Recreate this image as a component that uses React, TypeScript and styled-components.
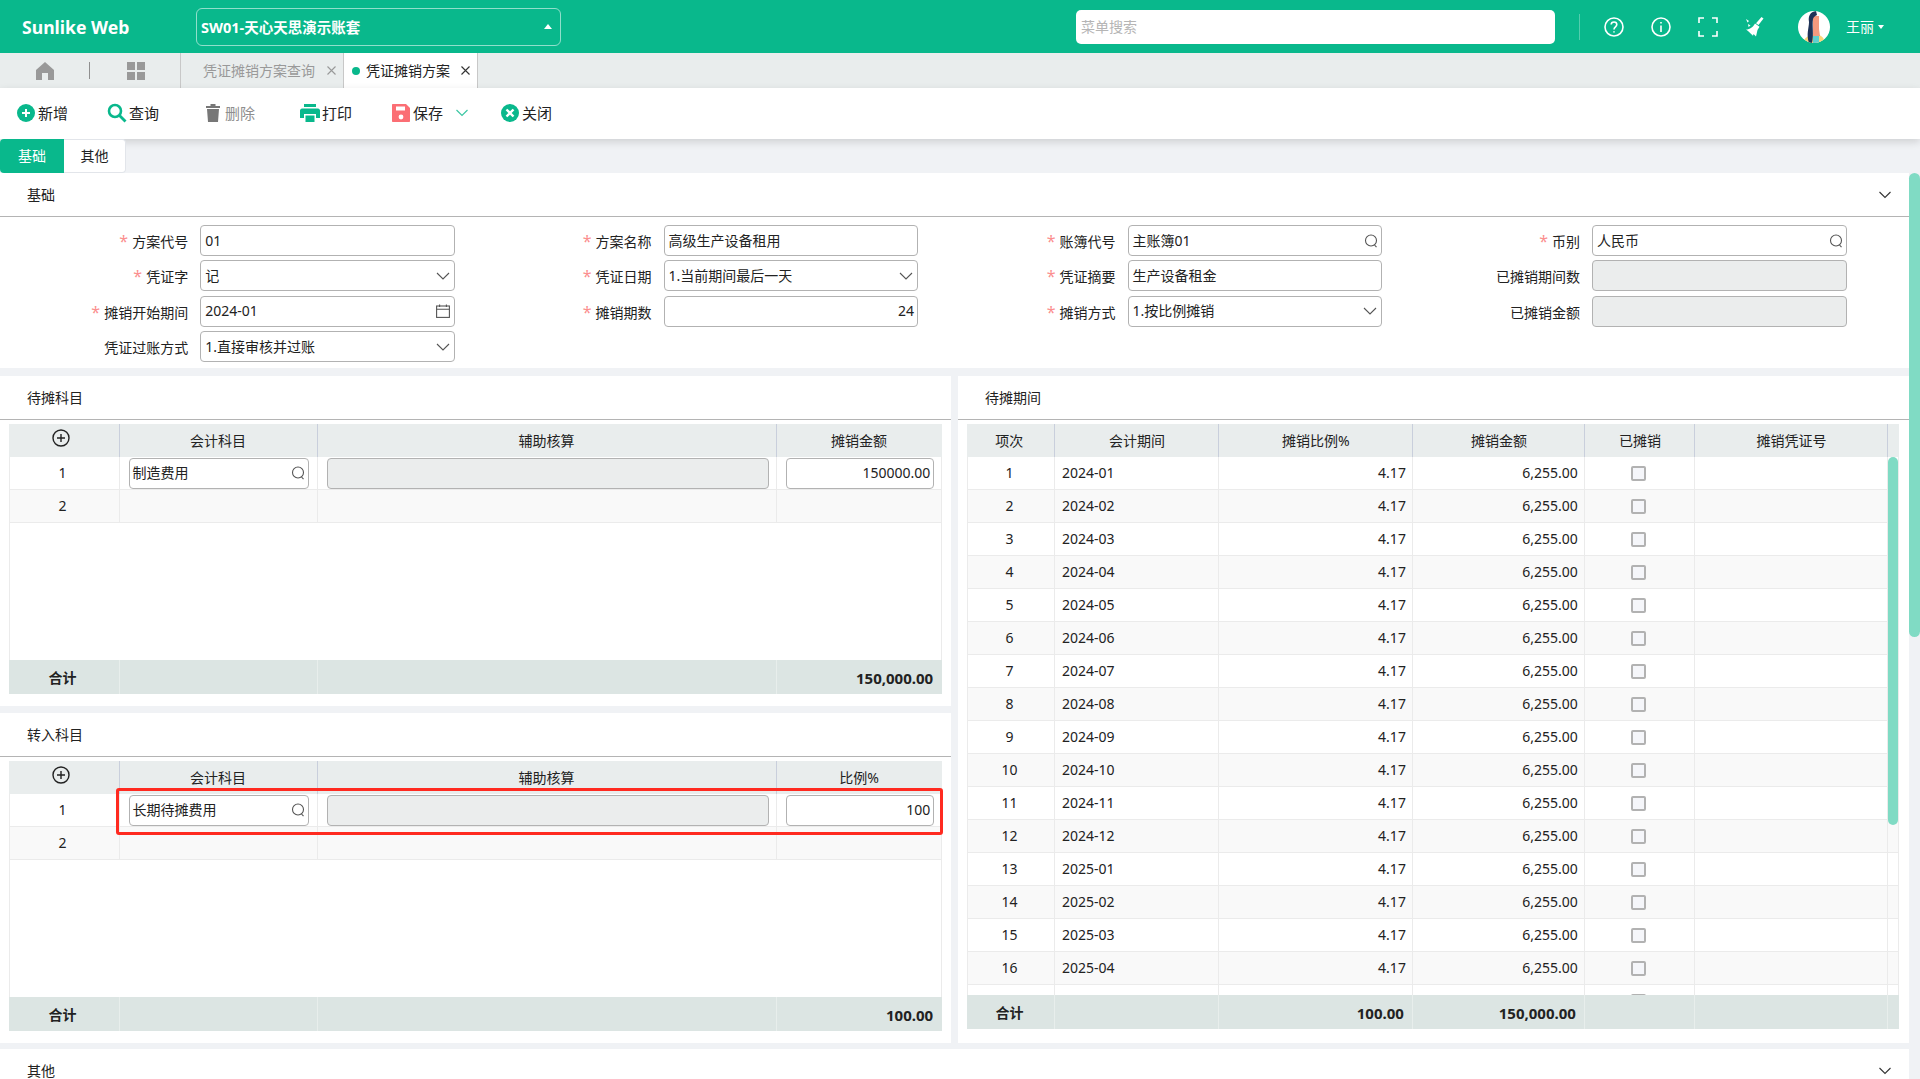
import React from 'react'
import styled, { createGlobalStyle } from 'styled-components'

const GlobalStyle = createGlobalStyle`
  html, body {
    margin: 0;
    padding: 0;
    background: #f0f2f5;
    font-family: "Noto Sans", "Noto Sans CJK SC", sans-serif;
    font-size: 14px;
    line-height: 20px;
    color: #222;
  }
  * { box-sizing: border-box; }
`

const GREEN = '#09b88c'

const Page = styled.div`
  width: 1920px;
  height: 1079px;
  overflow: hidden;
  display: flex;
  flex-direction: column;
  background: #f0f2f5;
`

/* top bar */
const TopBar = styled.header`
  height: 53px;
  flex: none;
  display: flex;
  align-items: center;
  background: ${GREEN};
  color: #fff;
`

const Logo = styled.div`
  width: 196px;
  padding-left: 22px;
  font-size: 17.6px;
  font-weight: 700;
`

const AccountSelect = styled.div`
  width: 365px;
  height: 38px;
  display: flex;
  align-items: center;
  justify-content: space-between;
  padding: 0 8px 0 4px;
  border: 1px solid rgba(255, 255, 255, 0.55);
  border-radius: 6px;
  font-size: 14.5px;
  font-weight: 700;
`

const CaretUp = styled.span`
  width: 0;
  height: 0;
  border-left: 4.5px solid transparent;
  border-right: 4.5px solid transparent;
  border-bottom: 5px solid #fff;
`

const SearchBox = styled.div`
  width: 479px;
  height: 34px;
  margin-left: 515px;
  display: flex;
  align-items: center;
  padding-left: 4px;
  background: #fff;
  border-radius: 5px;
  border: 1px solid rgba(255, 255, 255, 0.4);
  color: #b5b5b5;
`

const BarDivider = styled.span`
  width: 1px;
  height: 26px;
  margin-left: 24px;
  background: rgba(255, 255, 255, 0.3);
`

const BarIcons = styled.div`
  display: flex;
  align-items: center;
  gap: 27px;
  margin-left: 24px;
`

const BarIcon = styled.svg`
  width: 20px;
  height: 20px;
  display: block;
  fill: none;
  stroke: #fff;
  stroke-width: 1.6;
`

const Broom = styled.svg`
  width: 20px;
  height: 20px;
  display: block;
  fill: #fff;
`

const Avatar = styled.svg`
  width: 32px;
  height: 32px;
  margin-left: 33px;
  border-radius: 50%;
  background: #fff;
`

const UserName = styled.div`
  margin-left: 16px;
  display: flex;
  align-items: center;
  gap: 4px;
`

const CaretDown = styled.span`
  width: 0;
  height: 0;
  border-left: 3.5px solid transparent;
  border-right: 3.5px solid transparent;
  border-top: 4px solid #fff;
`

/* open tabs */
const TabStrip = styled.nav`
  height: 35px;
  flex: none;
  display: flex;
  background: #e9eded;
`

const StripIcons = styled.div`
  width: 180px;
  display: flex;
  align-items: center;
  padding-left: 36px;
`

const StripDivider = styled.span`
  width: 1px;
  height: 17px;
  margin: 0 37px 0 35px;
  background: #8f8f8f;
`

const PageTab = styled.div<{ $active?: boolean; $width: number }>`
  width: ${p => p.$width}px;
  display: flex;
  align-items: center;
  gap: 4px;
  padding: ${p => (p.$active ? '0 7px 0 8px' : '0 7px 0 22px')};
  border-left: 1px solid #c8c8c8;
  border-right: ${p => (p.$active ? '1px solid #c8c8c8' : 'none')};
  background: ${p => (p.$active ? '#fff' : 'transparent')};
  color: ${p => (p.$active ? '#222' : '#999')};
`

const TabDot = styled.span`
  width: 8px;
  height: 8px;
  margin-right: 2px;
  border-radius: 50%;
  background: ${GREEN};
`

const TabClose = styled.svg<{ $dark?: boolean }>`
  width: 9px;
  height: 9px;
  margin-left: auto;
  fill: none;
  stroke: ${p => (p.$dark ? '#333' : '#999')};
  stroke-width: 1.1;
`

/* toolbar */
const Toolbar = styled.div`
  height: 51px;
  flex: none;
  position: relative;
  display: flex;
  align-items: center;
  padding: 0 0 2px 16px;
  background: #fff;
  box-shadow: 0 3px 8px rgba(0, 0, 0, 0.14);
`

const ToolButton = styled.div<{ $disabled?: boolean; $width: number }>`
  width: ${p => p.$width}px;
  flex: none;
  display: flex;
  align-items: center;
  gap: 2px;
  font-size: 15px;
  color: ${p => (p.$disabled ? '#8e8e8e' : '#222')};
`

const ToolIcon = styled.svg`
  width: 20px;
  height: 20px;
  flex: none;
  display: block;
`

const SaveChevron = styled.svg`
  width: 12px;
  height: 8px;
  margin-left: 11px;
  fill: none;
  stroke: #3cc7a3;
  stroke-width: 1.2;
`

/* body */
const Body = styled.div`
  flex: 1;
  min-height: 0;
  position: relative;
`

const ScrollThumb = styled.div`
  position: absolute;
  top: 34px;
  right: 0;
  width: 11px;
  height: 464px;
  border-radius: 6px;
  background: #80dbc4;
`

const FormTabs = styled.div`
  height: 34px;
  display: flex;
`

const FormTab = styled.div<{ $active?: boolean; $width: number }>`
  width: ${p => p.$width}px;
  display: flex;
  align-items: center;
  justify-content: center;
  padding-bottom: 1px;
  background: ${p => (p.$active ? GREEN : '#fff')};
  color: ${p => (p.$active ? '#fff' : '#222')};
  border-radius: ${p => (p.$active ? '4px 0 0 4px' : '0 4px 4px 0')};
  border: ${p => (p.$active ? 'none' : '1px solid #e2e5ea')};
  border-left: none;
`

const Content = styled.div`
  width: 1908.6px;
  display: flex;
  flex-direction: column;
`

const Section = styled.section<{ $height?: number; $bottom?: number; $top?: number; $width?: number }>`
  background: #fff;
  display: flex;
  flex-direction: column;
  flex: none;
  width: ${p => (p.$width ? `${p.$width}px` : '100%')};
  height: ${p => (p.$height ? `${p.$height}px` : 'auto')};
  padding-bottom: ${p => p.$bottom ?? 0}px;
  margin-top: ${p => p.$top ?? 0}px;
`

const SectionHead = styled.div`
  height: 44px;
  flex: none;
  display: flex;
  align-items: center;
  justify-content: space-between;
  padding: 0 18px 0 27px;
  border-bottom: 1px solid #b4b4b4;
`

const Fold = styled.svg`
  width: 12px;
  height: 8px;
  fill: none;
  stroke: #333;
  stroke-width: 1.1;
`

const FormGrid = styled.div`
  height: 151px;
  display: grid;
  grid-template-columns: 454.7px 463.4px 464px 464.5px;
  grid-auto-rows: 35.3px;
  padding-top: 6px;
`

const FormItem = styled.div`
  display: flex;
  align-items: center;
  justify-content: flex-end;
`

const Label = styled.label<{ $required?: boolean }>`
  margin-right: 12px;
  padding-top: 2px;
  white-space: nowrap;
  &::before {
    content: ${p => (p.$required ? "'*'" : "''")};
    margin-right: 4px;
    font-size: 16px;
    color: #fb8f8f;
  }
`

const Field = styled.div<{ $width?: number; $disabled?: boolean; $right?: boolean; $inset?: number }>`
  width: ${p => (p.$width ? `${p.$width}px` : '100%')};
  height: 31px;
  flex: none;
  display: flex;
  align-items: center;
  justify-content: ${p => (p.$right ? 'flex-end' : 'space-between')};
  padding: 0 ${p => (p.$right ? 3 : 4)}px 0 ${p => p.$inset ?? 4}px;
  background: ${p => (p.$disabled ? '#ebeded' : '#fff')};
  border: 1px solid #b2b2b2;
  border-radius: 4px;
  white-space: nowrap;
`

const FieldIcon = styled.svg`
  width: 14px;
  height: 14px;
  flex: none;
  fill: none;
  stroke: #555;
  stroke-width: 1.1;
`

const SearchIcon = styled(FieldIcon)`
  margin-right: -1px;
`

const Columns = styled.div`
  display: flex;
  justify-content: space-between;
  margin-top: 8px;
  height: 667px;
`

const LeftColumn = styled.div`
  width: 951px;
  display: flex;
  flex-direction: column;
  justify-content: space-between;
`

/* tables */
const Table = styled.div`
  flex: 1;
  min-height: 0;
  margin: 4px 9.4px 0 9px;
  display: flex;
  flex-direction: column;
`

const Row = styled.div<{ $cols: string; $even?: boolean }>`
  height: 33px;
  flex: none;
  display: grid;
  grid-template-columns: ${p => p.$cols};
  background: ${p => (p.$even ? '#f9f9f9' : '#fff')};
  border-bottom: 1px solid #ebebeb;
`

const HeadRow = styled(Row)`
  background: #e9eded;
  border-bottom: none;
  border-left: 1px solid #e9eded;
`

const FootRow = styled(Row)`
  height: 34px;
  background: #dce5e3;
  border-bottom: none;
  border-left: 1px solid #dce5e3;
  font-weight: 700;
`

const HeadCell = styled.div`
  display: flex;
  align-items: center;
  justify-content: center;
  border-left: 1px solid #c9cfdc;
  &:first-child {
    border-left: none;
    padding-right: 4px;
  }
`

const Cell = styled.div<{ $align?: 'left' | 'center' | 'right'; $pad?: string }>`
  display: flex;
  align-items: center;
  justify-content: ${p =>
    p.$align === 'right' ? 'flex-end' : p.$align === 'left' ? 'flex-start' : 'center'};
  padding: ${p => p.$pad ?? '0 6.5px'};
  border-left: 1px solid #ebebeb;
  white-space: nowrap;
  &:first-child {
    border-left: none;
    padding-right: 10px;
  }
`

const FootCell = styled(Cell)`
  border-left-color: #e8eeec;
  padding-right: 8.5px;
  padding-top: 1px;
  font-size: ${p => (p.$align === 'right' ? '15px' : '14px')};
`

const TableBody = styled.div`
  flex: 1;
  min-height: 0;
  position: relative;
  overflow: hidden;
  border-left: 1px solid #ebebeb;
  border-right: 1px solid #ebebeb;
`

const InnerThumb = styled.div`
  position: absolute;
  top: 0;
  right: 0;
  width: 10.5px;
  height: 368px;
  border-radius: 6px;
  background: #80dbc4;
`

const Check = styled.span`
  width: 15px;
  height: 15px;
  margin-right: 2px;
  background: #f5f6fa;
  border: 2px solid #b2b2b2;
  border-radius: 2px;
`

const AddIcon = styled.svg`
  width: 18px;
  height: 18px;
  margin: -5px 2px 0 0;
  fill: none;
  stroke: #222;
  stroke-width: 1.4;
`

const Highlight = styled.div`
  position: absolute;
  left: 116px;
  top: 649px;
  width: 827px;
  height: 47px;
  border: 3px solid #ff2a20;
  border-radius: 3px;
  pointer-events: none;
`

const Search = () => (
  <SearchIcon viewBox="0 0 14 14">
    <circle cx="7" cy="6.5" r="5.5" />
    <path d="M10.5 11 L12.5 13.2" />
  </SearchIcon>
)

const Chevron = () => (
  <FieldIcon viewBox="0 0 14 14">
    <path d="M1 4 L7 10 L13 4" />
  </FieldIcon>
)

const Calendar = () => (
  <FieldIcon viewBox="0 0 14 14">
    <rect x="0.6" y="2" width="12.8" height="11.4" />
    <path d="M0.6 5.2 H13.4 M3.6 0.4 V3 M10.4 0.4 V3" />
  </FieldIcon>
)

const Close = ({ dark }: { dark?: boolean }) => (
  <TabClose $dark={dark} viewBox="0 0 9 9">
    <path d="M0.5 0.5 L8.5 8.5 M8.5 0.5 L0.5 8.5" />
  </TabClose>
)

const LEFT_COLS = '108.6px 198px 459px 1fr'
const RIGHT_COLS = '86.4px 164px 194px 172px 110px 193px 1fr'

const formItems: {
  label: string
  required?: boolean
  value?: string
  icon?: 'search' | 'chevron' | 'calendar'
  disabled?: boolean
  right?: boolean
}[] = [
  { label: '方案代号', required: true, value: '01' },
  { label: '方案名称', required: true, value: '高级生产设备租用' },
  { label: '账簿代号', required: true, value: '主账簿01', icon: 'search' },
  { label: '币别', required: true, value: '人民币', icon: 'search' },
  { label: '凭证字', required: true, value: '记', icon: 'chevron' },
  { label: '凭证日期', required: true, value: '1.当前期间最后一天', icon: 'chevron' },
  { label: '凭证摘要', required: true, value: '生产设备租金' },
  { label: '已摊销期间数', disabled: true },
  { label: '摊销开始期间', required: true, value: '2024-01', icon: 'calendar' },
  { label: '摊销期数', required: true, value: '24', right: true },
  { label: '摊销方式', required: true, value: '1.按比例摊销', icon: 'chevron' },
  { label: '已摊销金额', disabled: true },
  { label: '凭证过账方式', value: '1.直接审核并过账', icon: 'chevron' },
]

const periods = [
  '2024-01', '2024-02', '2024-03', '2024-04', '2024-05', '2024-06',
  '2024-07', '2024-08', '2024-09', '2024-10', '2024-11', '2024-12',
  '2025-01', '2025-02', '2025-03', '2025-04',
]

const SubjectTable = ({
  title,
  account,
  amount,
  amountHead,
  total,
}: {
  title: string
  account: string
  amount: string
  amountHead: string
  total: string
}) => (
  <Section $height={330} $bottom={12}>
    <SectionHead>{title}</SectionHead>
    <Table>
      <HeadRow $cols={LEFT_COLS}>
        <HeadCell>
          <AddIcon viewBox="0 0 18 18">
            <circle cx="9" cy="9" r="8" />
            <path d="M9 5 V13 M5 9 H13" />
          </AddIcon>
        </HeadCell>
        <HeadCell>会计科目</HeadCell>
        <HeadCell>辅助核算</HeadCell>
        <HeadCell>{amountHead}</HeadCell>
      </HeadRow>
      <TableBody>
        <Row $cols={LEFT_COLS}>
          <Cell>1</Cell>
          <Cell $pad="0 8px 0 9px">
            <Field $inset={3}>
              {account}
              <Search />
            </Field>
          </Cell>
          <Cell $pad="0 6.6px 0 9px">
            <Field $disabled />
          </Cell>
          <Cell $pad="0 6.4px 0 9px">
            <Field $right>{amount}</Field>
          </Cell>
        </Row>
        <Row $cols={LEFT_COLS} $even>
          <Cell>2</Cell>
          <Cell />
          <Cell />
          <Cell />
        </Row>
      </TableBody>
      <FootRow $cols={LEFT_COLS}>
        <FootCell>合计</FootCell>
        <FootCell />
        <FootCell />
        <FootCell $align="right">{total}</FootCell>
      </FootRow>
    </Table>
  </Section>
)

export default function App() {
  return (
    <Page>
      <GlobalStyle />
      <TopBar>
        <Logo>Sunlike Web</Logo>
        <AccountSelect>
          SW01-天心天思演示账套
          <CaretUp />
        </AccountSelect>
        <SearchBox>菜单搜索</SearchBox>
        <BarDivider />
        <BarIcons>
          <BarIcon viewBox="0 0 20 20">
            <circle cx="10" cy="10" r="9" />
            <path d="M7.2 7.6 C7.2 4.2 12.8 4.2 12.8 7.6 C12.8 9.8 10 9.8 10 12.4" />
            <path d="M10 14.2 V15.6" />
          </BarIcon>
          <BarIcon viewBox="0 0 20 20">
            <circle cx="10" cy="10" r="9" />
            <path d="M10 8.4 V15 M10 5 V6.4" />
          </BarIcon>
          <BarIcon viewBox="0 0 20 20">
            <path d="M1 6 V1 H6 M14 1 H19 V6 M19 14 V19 H14 M6 19 H1 V14" />
          </BarIcon>
          <Broom viewBox="0 0 20 20">
            <path d="M16.5 0 L18.5 1.5 L13.5 8 L11 6.2 Z" />
            <path d="M10 6.5 L14.5 9.8 L12.5 13 L11 19.5 L8.6 17 L8 18.8 L5.6 16.5 L3 14 L1 12.5 C5 12.5 8 10 10 6.5 Z" />
            <path d="M1 2 L4 4 L2.5 5.5 Z M3 7 L5.5 8.5 L3.5 10 Z" />
          </Broom>
        </BarIcons>
        <Avatar viewBox="0 0 32 32">
          <path d="M5 32 C6 27 10 25 13 24 L21 24 C24 25 26 27 27 32 Z" fill="#fbd67a" />
          <path d="M15 24 H21 V32 H15 Z" fill="#5fcfcf" />
          <path d="M15 5 H21 V18 L22 25 H15 Z" fill="#f59a7e" />
          <path d="M18 0 C12 1 10 5 11 11 C11 17 8 23 11 32 H14 C16 24 14 15 15 8 C15.5 6 17 5 19 4 Z" fill="#1f3358" />
        </Avatar>
        <UserName>
          王丽
          <CaretDown />
        </UserName>
      </TopBar>

      <TabStrip>
        <StripIcons>
          <svg width="18" height="18" viewBox="0 0 18 18">
            <path d="M9 0 L18 8 V18 H12 V11 H6 V18 H0 V8 Z" fill="#999" />
          </svg>
          <StripDivider />
          <svg width="18" height="18" viewBox="0 0 18 18">
            <path d="M0 0 H8 V8 H0 Z M10 0 H18 V8 H10 Z M0 10 H8 V18 H0 Z M10 10 H18 V18 H10 Z" fill="#999" />
          </svg>
        </StripIcons>
        <PageTab $width={163}>
          凭证摊销方案查询
          <Close />
        </PageTab>
        <PageTab $width={135} $active>
          <TabDot />
          凭证摊销方案
          <Close dark />
        </PageTab>
      </TabStrip>

      <Toolbar>
        <ToolButton $width={91}>
          <ToolIcon viewBox="0 0 20 20">
            <circle cx="10" cy="10" r="9" fill={GREEN} />
            <path d="M10 6 V14 M6 10 H14" stroke="#fff" strokeWidth="2" />
          </ToolIcon>
          新增
        </ToolButton>
        <ToolButton $width={96}>
          <ToolIcon viewBox="0 0 20 20">
            <circle cx="8" cy="8" r="6" fill="none" stroke={GREEN} strokeWidth="2.6" />
            <path d="M12.5 12.5 L18.5 18.5" stroke={GREEN} strokeWidth="2.8" />
          </ToolIcon>
          查询
        </ToolButton>
        <ToolButton $width={97} $disabled>
          <ToolIcon viewBox="0 0 20 20">
            <path d="M7.5 1 H12.5 V3 H17 V5 H3 V3 H7.5 Z M4 6 H16 L15 19 H5 Z" fill="#777" />
          </ToolIcon>
          删除
        </ToolButton>
        <ToolButton $width={91}>
          <ToolIcon viewBox="0 0 20 20">
            <path d="M4 1 H16 V4 H4 Z M2 5.5 H18 C19 5.5 20 6.5 20 7.5 V15 H16 V11 H4 V15 H0 V7.5 C0 6.5 1 5.5 2 5.5 Z M5.5 12.5 H14.5 V19 H5.5 Z" fill={GREEN} />
          </ToolIcon>
          打印
        </ToolButton>
        <ToolButton $width={109}>
          <ToolIcon viewBox="0 0 20 20">
            <path d="M1 2 C1 1.4 1.4 1 2 1 H15 L19 5 V18 C19 18.6 18.6 19 18 19 H2 C1.4 19 1 18.6 1 18 Z" fill="#fb6e74" />
            <path d="M5 3.5 H14 V7.5 H5 Z" fill="#fff" />
            <circle cx="10" cy="14" r="2.4" fill="#fff" />
          </ToolIcon>
          保存
          <SaveChevron viewBox="0 0 12 8">
            <path d="M0.5 1 L6 6.5 L11.5 1" />
          </SaveChevron>
        </ToolButton>
        <ToolButton $width={60}>
          <ToolIcon viewBox="0 0 20 20">
            <circle cx="10" cy="10" r="9" fill={GREEN} />
            <path d="M6.5 6.5 L13.5 13.5 M13.5 6.5 L6.5 13.5" stroke="#fff" strokeWidth="2.4" />
          </ToolIcon>
          关闭
        </ToolButton>
      </Toolbar>

      <Body>
        <ScrollThumb />
        <FormTabs>
          <FormTab $active $width={64}>基础</FormTab>
          <FormTab $width={62}>其他</FormTab>
        </FormTabs>
        <Content>
          <Section>
            <SectionHead>
              基础
              <Fold viewBox="0 0 12 8">
                <path d="M0.5 1 L6 6.5 L11.5 1" />
              </Fold>
            </SectionHead>
            <FormGrid>
              {formItems.map(item => (
                <FormItem key={item.label}>
                  <Label $required={item.required}>{item.label}</Label>
                  <Field $width={254.5} $disabled={item.disabled} $right={item.right}>
                    {item.value}
                    {item.icon === 'search' && <Search />}
                    {item.icon === 'chevron' && <Chevron />}
                    {item.icon === 'calendar' && <Calendar />}
                  </Field>
                </FormItem>
              ))}
            </FormGrid>
          </Section>
          <Columns>
            <LeftColumn>
              <SubjectTable
                title="待摊科目"
                account="制造费用"
                amount="150000.00"
                amountHead="摊销金额"
                total="150,000.00"
              />
              <SubjectTable
                title="转入科目"
                account="长期待摊费用"
                amount="100"
                amountHead="比例%"
                total="100.00"
              />
            </LeftColumn>
            <Section $width={950.6} $height={667} $bottom={14}>
              <SectionHead>待摊期间</SectionHead>
              <Table>
                <HeadRow $cols={RIGHT_COLS}>
                  <HeadCell>项次</HeadCell>
                  <HeadCell>会计期间</HeadCell>
                  <HeadCell>摊销比例%</HeadCell>
                  <HeadCell>摊销金额</HeadCell>
                  <HeadCell>已摊销</HeadCell>
                  <HeadCell>摊销凭证号</HeadCell>
                  <HeadCell />
                </HeadRow>
                <TableBody>
                  {periods.map((period, i) => (
                    <Row key={period} $cols={RIGHT_COLS} $even={i % 2 === 1}>
                      <Cell>{i + 1}</Cell>
                      <Cell $align="left">{period}</Cell>
                      <Cell $align="right">4.17</Cell>
                      <Cell $align="right">6,255.00</Cell>
                      <Cell>
                        <Check />
                      </Cell>
                      <Cell />
                      <Cell />
                    </Row>
                  ))}
                  {/* next row is cut by the footer, only its checkbox top shows */}
                  <Row $cols={RIGHT_COLS}>
                    <Cell />
                    <Cell />
                    <Cell />
                    <Cell />
                    <Cell>
                      <Check />
                    </Cell>
                    <Cell />
                    <Cell />
                  </Row>
                  <InnerThumb />
                </TableBody>
                <FootRow $cols={RIGHT_COLS}>
                  <FootCell>合计</FootCell>
                  <FootCell />
                  <FootCell $align="right">100.00</FootCell>
                  <FootCell $align="right">150,000.00</FootCell>
                  <FootCell />
                  <FootCell />
                  <FootCell />
                </FootRow>
              </Table>
            </Section>
          </Columns>
          <Section $top={6}>
            <SectionHead>
              其他
              <Fold viewBox="0 0 12 8">
                <path d="M0.5 1 L6 6.5 L11.5 1" />
              </Fold>
            </SectionHead>
          </Section>
        </Content>
        <Highlight />
      </Body>
    </Page>
  )
}
